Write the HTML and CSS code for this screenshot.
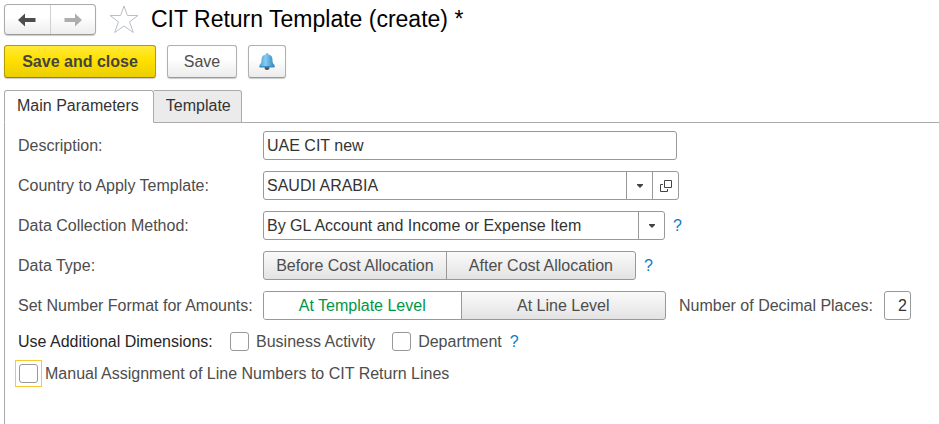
FILE: index.html
```html
<!DOCTYPE html>
<html lang="en">
<head>
<meta charset="utf-8">
<meta name="viewport" content="width=device-width, initial-scale=1">
<title>CIT Return Template (create)</title>
<link rel="stylesheet" href="styles.css">
</head>
<body>
<header class="titlebar">
  <nav class="history" aria-label="History">
    <button type="button" class="history-btn" aria-label="Back">
      <svg width="18" height="14" viewBox="0 0 18 14" fill="currentColor"><path d="M0 7 7 0.500V5H17.500V9H7V13.500Z"/></svg>
    </button>
    <button type="button" class="history-btn forward" aria-label="Forward">
      <svg width="18" height="14" viewBox="0 0 18 14" fill="currentColor"><path d="M18 7 11 0.500V5H0.500V9H11V13.500Z"/></svg>
    </button>
  </nav>
  <button type="button" class="star" aria-label="Add to favorites">
    <svg width="30" height="30" viewBox="0 0 30 30" fill="none" stroke="#b9bfc5" stroke-width="1"><path d="M15 1 18.400 10.500H29L20.600 16.800 24.300 27.500 15 21 5.700 27.500 9.400 16.800 1 10.500H11.600Z"/></svg>
  </button>
  <h1>CIT Return Template (create) *</h1>
</header>

<div class="toolbar">
  <button type="button" class="btn primary">Save and close</button>
  <button type="button" class="btn save">Save</button>
  <button type="button" class="btn bell" aria-label="Notifications">
    <svg width="18" height="18" viewBox="0 0 18 18">
      <defs><linearGradient id="bell" x1="0" x2="1" y1="0" y2="0"><stop offset="0" stop-color="#4a9fd2"/><stop offset=".4" stop-color="#85cdf2"/><stop offset="1" stop-color="#3184bb"/></linearGradient></defs>
      <ellipse cx="9" cy="15" rx="2.500" ry="2" fill="#4c5155"/>
      <path d="M7.500 1.500Q7.500 0 9 0T10.500 1.500C13.500 2 14.500 4 14.500 7C14.500 9.500 15 10.800 16.500 12V14H1.500V12C3 10.800 3.500 9.500 3.500 7C3.500 4 4.500 2 7.500 1.500Z" fill="url(#bell)"/>
      <path d="M1.500 13H16.500V14.500H1.500Z" fill="#3c8fc4"/>
    </svg>
  </button>
</div>

<div class="tabs" role="tablist">
  <button type="button" class="tab active" role="tab" aria-selected="true">Main Parameters</button>
  <button type="button" class="tab" role="tab" aria-selected="false">Template</button>
</div>

<main class="panel">
  <form>
    <div class="row">
      <label class="caption" for="description">Description:</label>
      <input class="field description" id="description" type="text" value="UAE CIT new">
    </div>
    <div class="row">
      <label class="caption" for="country">Country to Apply Template:</label>
      <div class="combo country">
        <div class="picker">
          <select id="country"><option>SAUDI ARABIA</option></select>
          <span class="arrow"><svg width="6" height="4" viewBox="0 0 6 4"><path d="M0 0H6V1L3 4 0 1Z" fill="#444"/></svg></span>
        </div>
        <button type="button" class="open" aria-label="Open">
          <svg width="12" height="12" viewBox="0 0 12 12" fill="none" stroke="#444"><path d="M4.500 .5H11.500V7.500H4.500ZM3 4.500H.5V11.500H7.500V9"/></svg>
        </button>
      </div>
    </div>
    <div class="row">
      <label class="caption" for="method">Data Collection Method:</label>
      <div class="combo method">
        <div class="picker">
          <select id="method"><option>By GL Account and Income or Expense Item</option></select>
          <span class="arrow"><svg width="6" height="4" viewBox="0 0 6 4"><path d="M0 0H6V1L3 4 0 1Z" fill="#444"/></svg></span>
        </div>
      </div>
      <a class="help" href="#" aria-label="Help on data collection method">?</a>
    </div>
    <div class="row">
      <span class="caption" id="type-label">Data Type:</span>
      <div class="segments type" role="group" aria-labelledby="type-label">
        <button type="button">Before Cost Allocation</button>
        <button type="button">After Cost Allocation</button>
      </div>
      <a class="help" href="#" aria-label="Help on data type">?</a>
    </div>
    <div class="row">
      <span class="caption" id="format-label">Set Number Format for Amounts:</span>
      <div class="segments format" role="group" aria-labelledby="format-label">
        <button type="button" class="on" aria-pressed="true">At Template Level</button>
        <button type="button" aria-pressed="false">At Line Level</button>
      </div>
      <label class="decimals-label" for="decimals">Number of Decimal Places:</label>
      <input class="field decimals" id="decimals" type="text" inputmode="numeric" value="2">
    </div>
    <div class="checks">
      <span class="checks-title">Use Additional Dimensions:</span>
      <label class="check"><input type="checkbox">Business Activity</label>
      <label class="check"><input type="checkbox">Department</label>
      <a class="help" href="#" aria-label="Help on dimensions">?</a>
    </div>
    <div class="checks">
      <label class="check focused"><span class="ring"><input type="checkbox"></span>Manual Assignment of Line Numbers to CIT Return Lines</label>
    </div>
  </form>
</main>
</body>
</html>
```
FILE: styles.css
```css
* {
  box-sizing: border-box;
}

body {
  display: flex;
  flex-direction: column;
  min-height: 100vh;
  margin: 0;
  padding: 4px 0 0 4px;
  background: #fff;
  color: #4d4d4d;
  font: 16px/20px "Liberation Sans", Arial, sans-serif;
}

button,
input,
select {
  margin: 0;
  padding: 0;
  color: inherit;
  font: inherit;
}

svg {
  display: block;
}

.titlebar,
.toolbar,
.history,
.tabs,
.row,
.checks,
.check,
.combo,
.segments {
  display: flex;
  align-items: center;
}

.history {
  width: 92px;
  height: 31px;
  border: 1px solid #aaa;
  border-bottom-color: #999;
  border-radius: 4px;
  background: linear-gradient(#fff 40%, #ededed);
  box-shadow: 0 1px 1px #ccc;
}

.history-btn {
  display: flex;
  flex: 1;
  align-items: center;
  justify-content: center;
  height: 100%;
  border: 0;
  background: none;
  color: #4d4d4d;
}

.forward {
  border-left: 1px solid #d0d0d0;
  color: #adadad;
}

.star {
  margin-left: 13px;
  border: 0;
  background: none;
}

h1 {
  margin: 0 0 0 12px;
  padding-bottom: 2px;
  color: #000;
  font-size: 23px;
  font-weight: 400;
  line-height: 28px;
}

.toolbar {
  gap: 11px;
  margin-top: 10px;
}

.btn {
  height: 33px;
  border: 1px solid #b0b0b0;
  border-bottom-color: #999;
  border-radius: 3px;
  background: linear-gradient(#fff 40%, #ececec);
  box-shadow: 0 1px 1px #ccc;
}

.primary {
  width: 152px;
  border-color: #b39d00;
  border-bottom-color: #958300;
  background: linear-gradient(#ffea38, #ffe000 45%, #ebcf00);
  color: #444;
  font-weight: 700;
}

.save {
  width: 70px;
}

.bell {
  display: flex;
  align-items: center;
  justify-content: center;
  width: 38px;
}

.tabs {
  position: relative;
  margin-top: 12px;
}

.tab {
  height: 33px;
  padding: 0 10px 1px 12px;
  border: 1px solid #aaa;
  border-left: 0;
  border-radius: 0 3px 0 0;
  background: #ebebeb;
  color: #333;
}

.tab.active {
  padding-right: 14px;
  border-bottom-color: #fff;
  border-left: 1px solid #aaa;
  border-radius: 3px 3px 0 0;
  background: #fff;
}

.panel {
  flex: 1;
  margin-top: -1px;
  padding: 8px 0 0 13px;
  border: solid #aaa;
  border-width: 1px 0 0 1px;
}

.row {
  margin-bottom: 11px;
}

.caption {
  flex: 0 0 245px;
  white-space: nowrap;
}

.field,
.combo,
.segments {
  height: 29px;
  border: 1px solid #999;
  border-radius: 3px;
  background: #fff;
}

.field,
.combo {
  color: #333;
}

.field {
  padding: 0 3px;
}

.description {
  flex: 0 1 414px;
}

.country {
  flex: 0 1 416px;
}

.method {
  flex: 0 1 402px;
}

.picker {
  position: relative;
  flex: 1;
  height: 100%;
}

.picker select {
  width: 100%;
  height: 100%;
  padding: 0 28px 0 3px;
  border: 0;
  appearance: none;
  background: none;
}

.arrow {
  position: absolute;
  top: 0;
  right: 0;
  bottom: 0;
  display: flex;
  align-items: center;
  justify-content: center;
  width: 26px;
  border-left: 1px solid #999;
  pointer-events: none;
}

.open {
  display: flex;
  align-items: center;
  justify-content: center;
  width: 26px;
  height: 100%;
  border: 0;
  border-left: 1px solid #999;
  background: none;
}

.help {
  margin-left: 8px;
  color: #0b7bc4;
  text-decoration: none;
}

.segments {
  overflow: hidden;
  background: linear-gradient(#fafafa, #e3e3e3);
}

.segments button {
  flex: 1 1 49%;
  height: 100%;
  border: 0;
  background: none;
  white-space: nowrap;
}

.segments button + button {
  flex-basis: 51%;
  border-left: 1px solid #999;
}

.segments .on {
  background: #fff;
  color: #009646;
}

.type {
  flex: 0 1 373px;
}

.format {
  flex: 0 1 403px;
}

.decimals-label {
  flex: 0 0 199px;
  margin-left: 13px;
  white-space: nowrap;
}

.decimals {
  width: 27px;
  margin-left: 6px;
  text-align: right;
}

.checks {
  height: 21px;
  margin-bottom: 11px;
}

.checks-title {
  flex: 0 0 212px;
  color: #262626;
}

.check {
  gap: 7px;
}

.check + .check {
  margin-left: 17px;
}

.check input {
  display: block;
  width: 19px;
  height: 19px;
  border: 1px solid #999;
  border-radius: 3px;
  appearance: none;
  background: #fff;
}

.focused {
  gap: 3px;
  margin-left: -3px;
}

.ring {
  padding: 3px;
  border: 1px solid #f8c92c;
}
```
